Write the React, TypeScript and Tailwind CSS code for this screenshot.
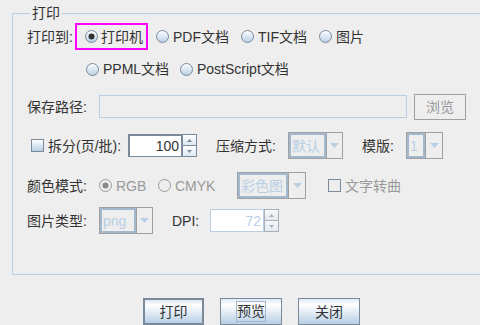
import React from "react";

const font = "font-['Liberation_Sans','Noto_Sans_CJK_SC',sans-serif]";

function RadioDot({ checked = false, disabled = false }: { checked?: boolean; disabled?: boolean }) {
  return (
    <svg width="13" height="13" viewBox="0 0 13 13" className="shrink-0">
      <defs>
        <linearGradient id="rg" x1="0" y1="0" x2="0" y2="1">
          <stop offset="0" stopColor="#ffffff" />
          <stop offset="1" stopColor="#b8cfe5" />
        </linearGradient>
      </defs>
      <circle
        cx="6.5"
        cy="6.5"
        r="6"
        fill={disabled ? "#eeeeee" : "url(#rg)"}
        stroke={disabled ? "#999999" : "#7a8a99"}
      />
      {checked && <circle cx="6.5" cy="6.5" r="3" fill={disabled ? "#8a8a8a" : "#333333"} />}
    </svg>
  );
}

function Radio({
  label,
  w,
  checked,
  disabled,
}: {
  label: string;
  w?: string;
  checked?: boolean;
  disabled?: boolean;
}) {
  return (
    <div className={`flex items-center gap-[3px] ${w ?? ""}`}>
      <RadioDot checked={checked} disabled={disabled} />
      <span className={disabled ? "text-[#999999]" : "text-[#333333]"}>{label}</span>
    </div>
  );
}

function CheckBox({ disabled = false }: { disabled?: boolean }) {
  return (
    <span
      className={`block size-[13px] shrink-0 border ${
        disabled
          ? "border-[#7a8a99] bg-[#eeeeee]"
          : "border-[#7a8a99] bg-[linear-gradient(to_bottom,#ffffff,#b8cfe5)]"
      }`}
    />
  );
}

function Arrow({ color = "#b8cfe5" }: { color?: string }) {
  return (
    <svg width="9" height="5" viewBox="0 0 9 5">
      <path d="M0 0h9L4.5 5z" fill={color} />
    </svg>
  );
}

function Combo({ value, w, text }: { value: string; w: string; text: string }) {
  return (
    <div className={`flex h-[27px] ${w} border border-[#a0a0a0]`}>
      <div
        className={`flex ${text} items-center border-2 border-[#a3b8cc] bg-[#eeeeee] pl-[1px] text-[#b8cfe5]`}
      >
        {value}
      </div>
      <div className="flex flex-1 items-center justify-center border-l border-[#a0a0a0]">
        <Arrow />
      </div>
    </div>
  );
}

function Spinner({ value, disabled = false }: { value: string; disabled?: boolean }) {
  const arrowBtn =
    "flex flex-1 items-center justify-center border border-[#7a8a99] bg-[linear-gradient(to_bottom,#ffffff,#dde8f3)]";
  return (
    <div className="flex h-[23px] w-[69px]">
      <div
        className={`flex w-[54px] items-center justify-end bg-white pr-[2px] ${
          disabled
            ? "border border-[#b8cfe5] text-[#b8cfe5]"
            : "border border-[#7a8a99] border-t-2 border-l-2 text-[#333333]"
        }`}
      >
        {value}
      </div>
      <div className={`flex w-[15px] flex-col ${disabled ? "opacity-60" : ""}`}>
        <div className={arrowBtn}>
          <svg width="5" height="3" viewBox="0 0 5 3">
            <path d="M2.5 0L5 3H0z" fill="#7a8a99" />
          </svg>
        </div>
        <div className={`${arrowBtn} border-t-0`}>
          <svg width="5" height="3" viewBox="0 0 5 3">
            <path d="M0 0h5L2.5 3z" fill="#7a8a99" />
          </svg>
        </div>
      </div>
    </div>
  );
}

function Btn({ label, isDefault, focused }: { label: string; isDefault?: boolean; focused?: boolean }) {
  return (
    <button
      type="button"
      className={`flex h-[27px] items-center justify-center bg-[linear-gradient(to_bottom,#dde8f3_0%,#ffffff_22%,#b8cfe5_100%)] text-[#333333] ${
        isDefault ? "w-[61px] border-2 border-[#7a8a99]" : "w-[62px] border border-[#7a8a99]"
      }`}
    >
      <span className={focused ? "border border-[#a3b8cc] px-[0px] leading-[19px]" : ""}>{label}</span>
    </button>
  );
}

export default function App() {
  return (
    <div className={`h-[325px] w-[480px] overflow-hidden bg-[#eeeeee] text-[14px] leading-[16px] ${font}`}>
      <fieldset className="ml-[12px] mt-[5px] h-[270px] w-[472px] border border-[#b8cfe5] pl-[14px]">
        <legend className="ml-[3px] px-[2px] text-[#333333]">打印</legend>

        {/* 打印到 */}
        <div className="mt-[2px] flex h-[27px] items-center">
          <span className="w-[48px] text-[#333333]">打印到:</span>
          <div className="flex h-[27px] w-[73px] items-center border-2 border-[#ff00ff] pl-[8px]">
            <Radio label="打印机" checked />
          </div>
          <Radio label="PDF文档" w="ml-[8px] w-[85px] gap-[4px]" />
          <Radio label="TIF文档" w="w-[78px] gap-[4px]" />
          <Radio label="图片" w="gap-[4px]" />
        </div>

        <div className="mt-[7px] flex h-[24px] items-center pl-[59px]">
          <Radio label="PPML文档" w="w-[94px] gap-[4px]" />
          <Radio label="PostScript文档" w="gap-[4px]" />
        </div>

        {/* 保存路径 */}
        <div className="mt-[12px] flex h-[27px] items-center">
          <span className="w-[72px] text-[#333333]">保存路径:</span>
          <div className="h-[23px] w-[308px] border border-[#b8cfe5] bg-[#eeeeee]" />
          <button
            type="button"
            className="ml-[7px] flex h-[26px] w-[52px] items-center justify-center border border-[#a0a0a0] bg-[#eeeeee] text-[#999999]"
          >
            浏览
          </button>
        </div>

        {/* 拆分 / 压缩 / 模版 */}
        <div className="mt-[12px] flex h-[27px] items-center">
          <div className="ml-[4px] flex w-[97px] items-center gap-[4px]">
            <CheckBox />
            <span className="text-[#333333]">拆分(页/批):</span>
          </div>
          <Spinner value="100" />
          <span className="ml-[19px] w-[72px] text-[#333333]">压缩方式:</span>
          <Combo value="默认" w="w-[55px]" text="w-[37px]" />
          <span className="ml-[19px] w-[44px] text-[#333333]">模版:</span>
          <Combo value="1" w="w-[37px]" text="w-[18px]" />
        </div>

        {/* 颜色模式 */}
        <div className="mt-[13px] flex h-[27px] items-center">
          <span className="w-[72px] text-[#333333]">颜色模式:</span>
          <Radio label="RGB" w="w-[59px] gap-[4px]" checked disabled />
          <Radio label="CMYK" w="w-[79px] gap-[4px]" disabled />
          <Combo value="彩色图" w="w-[69px]" text="w-[50px]" />
          <div className="ml-[22px] flex items-center gap-[4px]">
            <CheckBox disabled />
            <span className="text-[#999999]">文字转曲</span>
          </div>
        </div>

        {/* 图片类型 */}
        <div className="mt-[8px] flex h-[27px] items-center">
          <span className="w-[72px] text-[#333333]">图片类型:</span>
          <Combo value="png" w="w-[54px]" text="w-[36px]" />
          <span className="ml-[19px] w-[38px] text-[#333333]">DPI:</span>
          <Spinner value="72" disabled />
        </div>
      </fieldset>

      <div className="ml-[143px] mt-[23px] flex gap-[16px]">
        <Btn label="打印" isDefault />
        <Btn label="预览" focused />
        <Btn label="关闭" />
      </div>
    </div>
  );
}
